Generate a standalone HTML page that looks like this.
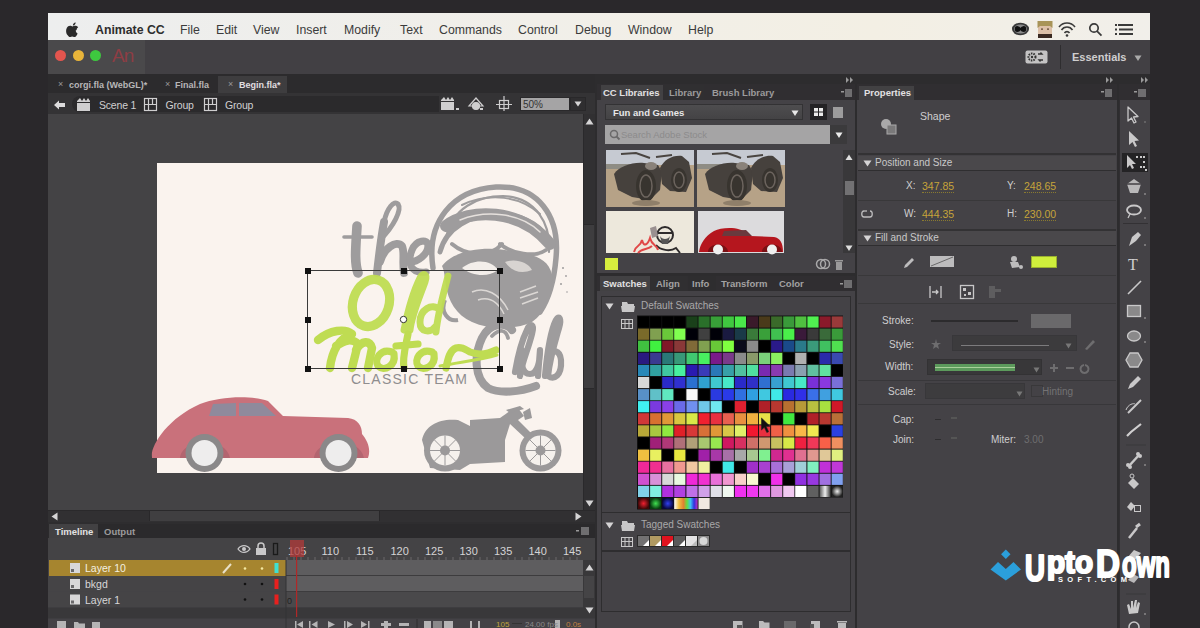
<!DOCTYPE html>
<html><head><meta charset="utf-8">
<style>
*{margin:0;padding:0;box-sizing:border-box}
html,body{width:1200px;height:628px;overflow:hidden;background:#2a282b;font-family:"Liberation Sans",sans-serif}
div{position:absolute}
.t{white-space:nowrap;line-height:1}
.mb{top:11px;font-size:12.3px;color:#3b3b3b}
.pt{font-size:10px;color:#c9c8c9}
.ptb{font-size:10px;color:#dcdbdc;font-weight:bold}
</style></head><body>

<!-- MENU BAR -->
<div style="left:48px;top:13px;width:1102px;height:27px;background:linear-gradient(90deg,#edeeee,#f1efe9 45%,#f3efe4 75%,#f1efea)">
  <svg style="position:absolute;left:18px;top:9px" width="13" height="15" viewBox="0 0 13 15"><path d="M10.6 8c0-1.8 1.5-2.7 1.6-2.8-.9-1.3-2.3-1.5-2.8-1.5-1.2-.1-2.3.7-2.9.7-.6 0-1.5-.7-2.5-.7C2.700 3.8 1.500 4.500.9 5.700-.4 8-.1 11.400 1.700 13.300c.6.900 1.300 1.800 2.200 1.800.9 0 1.200-.6 2.300-.6s1.400.6 2.300.6c.9 0 1.500-.9 2.100-1.700.7-1 .9-1.900 1-2-.1 0-1.900-.7-1.900-2.800zM8.900 2.600c.5-.6.800-1.400.7-2.200-.7 0-1.500.5-2 1.100-.4.500-.8 1.300-.7 2.100.8.100 1.500-.4 2-1z" fill="#2a2a2a"/></svg>
  <div class="t mb" style="left:47px;font-weight:bold;color:#2e2e2e">Animate CC</div>
  <div class="t mb" style="left:132px">File</div>
  <div class="t mb" style="left:168px">Edit</div>
  <div class="t mb" style="left:205px">View</div>
  <div class="t mb" style="left:248px">Insert</div>
  <div class="t mb" style="left:296px">Modify</div>
  <div class="t mb" style="left:352px">Text</div>
  <div class="t mb" style="left:391px">Commands</div>
  <div class="t mb" style="left:470px">Control</div>
  <div class="t mb" style="left:527px">Debug</div>
  <div class="t mb" style="left:580px">Window</div>
  <div class="t mb" style="left:640px">Help</div>
  <!-- status icons -->
  <svg style="position:absolute;left:964px;top:8px" width="160" height="18" viewBox="0 0 160 18">
    <ellipse cx="8.500" cy="8" rx="8.500" ry="6.200" fill="#3a3a3a"/><ellipse cx="8.500" cy="8" rx="6.500" ry="4.500" fill="#8a8a8a"/><path d="M3.500 8 C3.500 5 6.500 5 8.500 8 C10.500 11 13.500 11 13.500 8 C13.500 5 10.500 5 8.500 8 C6.500 11 3.500 11 3.500 8Z" fill="#111" stroke="#111" stroke-width="1.500"/>
    <rect x="26" y="5" width="14" height="9" fill="#dcc0a8"/><path d="M25.500 0 L40.500 0 L40.500 7 L38 5 L28 5 L25.500 7Z" fill="#a89458"/><rect x="26" y="13" width="14" height="4" fill="#3a2a22"/><g fill="#5a4030"><rect x="29" y="7.500" width="2" height="1.200"/><rect x="35" y="7.500" width="2" height="1.200"/></g>
    <g fill="none" stroke="#3a3a3a" stroke-width="1.600"><path d="M47 6a10 10 0 0 1 16 0"/><path d="M49.500 9a6.500 6.500 0 0 1 11 0"/><path d="M52.500 12a3 3 0 0 1 5 0"/></g><circle cx="55" cy="14.500" r="1.300" fill="#3a3a3a"/>
    <g fill="none" stroke="#3a3a3a" stroke-width="1.700"><circle cx="82" cy="7" r="4.200"/><path d="M85 10.200l4.500 4.500"/></g>
    <g fill="#3a3a3a"><rect x="106" y="3" width="15" height="2"/><rect x="107" y="7.500" width="14" height="2"/><rect x="107" y="12" width="14" height="2"/><rect x="103" y="3" width="2" height="2"/><rect x="103" y="7.500" width="2" height="2"/><rect x="103" y="12" width="2" height="2"/></g>
  </svg>
</div>

<!-- TITLE BAR -->
<div style="left:48px;top:40px;width:1102px;height:34px;background:#424044"></div>
<div style="left:48px;top:40px;width:97px;height:34px;background:#4a494b"></div>
<div style="left:55px;top:50px;width:11px;height:11px;border-radius:6px;background:#e4554e"></div>
<div style="left:72.5px;top:50px;width:11px;height:11px;border-radius:6px;background:#e9b53a"></div>
<div style="left:89.5px;top:50px;width:11px;height:11px;border-radius:6px;background:#3ec93f"></div>
<div class="t" style="left:112px;top:46px;font-size:19px;letter-spacing:-1px;color:#8e3d44">An</div>
<svg style="position:absolute;left:1025px;top:50px" width="23" height="14"><rect x="0.500" y="0.500" width="22" height="13" rx="2" fill="#c4c3c4"/><circle cx="7" cy="7" r="3.500" fill="none" stroke="#333" stroke-width="2" stroke-dasharray="1.500 1"/><circle cx="7" cy="7" r="1.200" fill="#333"/><path d="M13 4 h4 l-1.500 -1.500 M18 10 h-4 l1.500 1.500" stroke="#333" stroke-width="1.300" fill="none"/></svg>
<div style="left:1060px;top:45px;width:1px;height:24px;background:#2e2d2f"></div>
<div class="t" style="left:1072px;top:52px;font-size:11px;font-weight:bold;color:#cfcecf">Essentials</div>
<svg style="position:absolute;left:1134px;top:55px" width="9" height="8"><path d="M0.500 0.500h7l-3.5 5.6z" fill="#aaa"/></svg>

<!-- DOC TABS -->
<div style="left:48px;top:74px;width:547px;height:19px;background:#2c2b2d"></div>
<div style="left:218px;top:76px;width:69px;height:17px;background:#3e3d3f"></div>
<div class="t" style="left:58px;top:80px;font-size:9px;color:#9a999a">&#215;</div>
<div class="t" style="left:69px;top:80.500px;font-size:9px;font-weight:bold;color:#b8b7b8">corgi.fla (WebGL)*</div>
<div class="t" style="left:165px;top:80px;font-size:9px;color:#9a999a">&#215;</div>
<div class="t" style="left:175px;top:80.500px;font-size:9px;font-weight:bold;color:#b8b7b8">Final.fla</div>
<div class="t" style="left:228px;top:80px;font-size:9px;color:#9a999a">&#215;</div>
<div class="t" style="left:239px;top:80.500px;font-size:9px;font-weight:bold;color:#e0dfe0">Begin.fla*</div>
<!-- EDIT BAR -->
<div style="left:48px;top:93px;width:547px;height:21px;background:#343335"></div>
<div style="left:72px;top:96px;width:367px;height:16px;background:#2b2a2c;border-radius:8px 0 0 8px"></div>
<svg style="position:absolute;left:53px;top:99px" width="13" height="12"><path d="M1 6 L6 1.500 L6 4 L12 4 L12 8 L6 8 L6 10.500 Z" fill="#dcdbdc"/></svg>
<div class="t" style="left:99px;top:99.500px;font-size:10.500px;color:#d0cfd0;letter-spacing:-0.200px">Scene 1</div>
<div class="t" style="left:165.500px;top:99.500px;font-size:10.500px;color:#d0cfd0;letter-spacing:-0.200px">Group</div>
<div class="t" style="left:225px;top:99.500px;font-size:10.500px;color:#d0cfd0;letter-spacing:-0.200px">Group</div>
<svg style="position:absolute;left:0;top:0" width="600" height="120" viewBox="0 0 600 120">
 <g fill="#cfcecf">
  <rect x="77" y="103" width="13" height="8"/><path d="M77 101 L80 98 L82 101 L84 98 L86 101 L88 98 L90 101 L90 102 L77 102Z"/>
  <rect x="441" y="102" width="13" height="8"/><path d="M441 100 L444 97 L446 100 L448 97 L450 100 L452 97 L454 100 L454 101 L441 101Z"/>
  <rect x="456" y="108" width="3" height="2"/><rect x="480" y="108" width="3" height="2"/>
 </g>
 <g fill="none" stroke="#cfcecf" stroke-width="1.200">
  <rect x="144.500" y="98.500" width="12" height="12"/><path d="M144.500 104.500h12M148.500 98.500v6M152.500 98.500v6M148.500 104.500v6"/>
  <rect x="204.500" y="98.500" width="12" height="12"/><path d="M204.500 104.500h12M208.500 98.500v6M212.500 98.500v6M208.500 104.500v6"/>
  <path d="M469 106 L476 98 L483 106 Z"/><circle cx="476" cy="106" r="3.500" fill="#cfcecf"/>
  <rect x="499.500" y="100.500" width="9" height="8"/><path d="M504 96v15M496 104.500h16"/>
 </g>
</svg>
<div style="left:520px;top:97px;width:50px;height:14px;background:#a5a4a5;border:1px solid #2a292b"></div>
<div class="t" style="left:523px;top:99.500px;font-size:10px;color:#333">50%</div>
<div style="left:570px;top:97px;width:16px;height:14px;background:#2f2e30;border:1px solid #29282a"></div>
<svg style="position:absolute;left:574px;top:101px" width="9" height="7"><path d="M0.500 0.500h7l-3.500 5z" fill="#d5d4d5"/></svg>
<!-- STAGE -->
<div style="left:48px;top:114px;width:547px;height:396px;background:#444345"></div>
<div style="left:583px;top:114px;width:12px;height:396px;background:#313032;border-left:1px solid #2a292b"></div>
<div style="left:584px;top:224px;width:10px;height:165px;background:#3e3d3f;border-top:1px solid #2a292b;border-bottom:1px solid #2a292b"></div>
<svg style="position:absolute;left:585px;top:118px" width="9" height="7"><path d="M0.500 6.500h8l-4-6z" fill="#d5d4d5"/></svg>
<svg style="position:absolute;left:585px;top:500px" width="9" height="7"><path d="M0.500 0.500h8l-4 6z" fill="#d5d4d5"/></svg>
<div style="left:157px;top:163px;width:426px;height:310px;background:#faf3ee;overflow:hidden">
</div>
<svg style="position:absolute;left:0;top:0" width="1200" height="628" viewBox="0 0 1200 628">
 <!-- helmet ring -->
 <g fill="none" stroke="#9e9c9d" stroke-linecap="round">
  <path d="M433 268 C426 222 452 190 496 187 C538 185 560 216 556 258 C554 282 548 300 540 312" stroke-width="5.500"/>
  <path d="M446 238 C452 208 478 196 503 196 C536 197 551 224 549 252" stroke-width="2.200"/>
  <path d="M462 205 C490 192 520 196 540 214" stroke-width="2"/>
 </g>
 <!-- goggles band -->
 <g fill="none" stroke="#9e9c9d" stroke-linecap="round">
  <path d="M440 252 C446 228 470 214 500 214 C526 215 545 228 552 246" stroke-width="5"/>
  <path d="M446 226 C470 208 520 208 550 244" stroke-width="12"/>
  <path d="M460 220 C485 210 520 212 540 232" stroke="#e6e1dd" stroke-width="1.500"/>
  <path d="M452 244 C466 256 490 258 502 244" stroke-width="4"/>
  <path d="M500 244 C512 254 535 258 546 250" stroke-width="4"/>
 </g>
 <!-- face / mask -->
 <path d="M442 266 C452 252 480 246 505 250 C530 254 548 256 552 275 C553 295 546 312 532 322 C515 330 490 330 472 322 C456 315 448 300 446 286 C445 277 444 270 442 266 Z" fill="#9e9c9d"/>
 <path d="M462 268 C474 258 492 260 498 270 C488 278 472 276 462 268 Z" fill="#f3eeea"/>
 <path d="M505 262 C515 258 528 262 532 270 C522 274 512 272 505 262 Z" fill="#d8d4d1"/>
 <g stroke="#dcd8d5" stroke-width="1.500" fill="none"><path d="M472 292 C485 286 500 294 508 310"/><path d="M478 300 C490 296 498 302 504 314"/><path d="M520 292 L536 286 M520 298 L538 292 M522 304 L538 298"/></g>
 <path d="M445 300 C440 312 448 322 458 320" stroke="#9e9c9d" stroke-width="4" fill="none"/>
 <g fill="#9e9c9d"><circle cx="563" cy="268" r="1"/><circle cx="566" cy="276" r="0.900"/><circle cx="561" cy="284" r="1"/><circle cx="567" cy="292" r="0.800"/></g>
 <!-- the -->
 <g fill="none" stroke="#9e9c9d" stroke-linecap="round" stroke-linejoin="round">
  <path d="M357 226 C356 245 354 262 358 273" stroke-width="9.6"/>
  <path d="M344 237 L372 237" stroke-width="3.6"/>
  <path d="M377 273 C379 255 381 238 384 222" stroke-width="8"/><path d="M384 222 C387 208 394 200 398 204 C402 210 394 226 380 240" stroke-width="5"/>
  <path d="M380 262 C384 248 396 240 402 246 C405 252 402 262 404 273" stroke-width="7.8"/>
  <path d="M410 262 C418 262 428 254 428 246 C428 238 416 240 412 250 C407 262 410 274 426 272" stroke-width="7.2"/>
 </g>
 <!-- Club -->
 <g fill="none" stroke="#9e9c9d" stroke-linecap="round" stroke-linejoin="round">
  <path d="M512 330 C506 322 490 322 482 338 C474 355 474 378 488 388 C500 394 520 392 536 386" stroke-width="8.1"/>
  <path d="M492 336 C500 328 506 330 508 338" stroke-width="3.8"/>
  <path d="M515 372 C518 355 522 340 527 330 C530 322 535 324 532 334 C528 350 522 362 520 376" stroke-width="6.2"/>
  <path d="M522 350 C520 362 522 374 530 374 C538 374 540 360 540 350 L538 376" stroke-width="6.2"/>
  <path d="M545 376 C547 354 550 332 556 320 C559 315 562 318 559 328 C555 342 550 358 548 376 C554 380 562 376 561 360 C560 350 552 348 548 356" stroke-width="6.2"/>
 </g>
 <!-- Old -->
 <g fill="none" stroke="#bfdc52" stroke-linecap="round" stroke-linejoin="round" stroke-opacity="0.95">
  <ellipse cx="371" cy="303" rx="18" ry="24" transform="rotate(18 371 303)" stroke-width="9.2"/>
  <path d="M404 330 C408 310 414 290 420 278 C423 272 428 274 425 282 C420 296 412 314 410 330" stroke-width="6.9"/>
  <path d="M440 310 C432 302 420 310 420 322 C420 332 430 334 436 326 M448 276 C444 292 438 312 436 332" stroke-width="6.9"/>
 </g>
 <!-- Motor -->
 <g fill="none" stroke="#bfdc52" stroke-linecap="round" stroke-linejoin="round">
  <path d="M318 340 C330 330 345 328 352 334 C340 338 332 350 330 368 M336 346 C345 340 352 338 358 344 L352 368 M356 350 C362 340 370 340 372 348 L368 368" stroke-width="8.4"/>
  <path d="M392 352 C380 348 374 360 378 366 C384 372 396 366 394 354" stroke-width="7.2"/>
  <path d="M408 334 C406 345 402 358 404 368 M396 346 L418 344" stroke-width="7.2"/>
  <path d="M432 352 C420 348 414 360 418 366 C424 372 436 366 434 354" stroke-width="7.2"/>
  <path d="M446 368 C448 358 450 350 456 348 C462 346 466 350 470 352 C480 356 488 354 496 350" stroke-width="7.2"/>
  <path d="M440 366 C460 362 480 360 497 355" stroke-width="3.0"/>
 </g>
 <text x="351" y="384" font-family="Liberation Sans" font-size="14" fill="#8f8d8e" textLength="116" lengthAdjust="spacing">CLASSIC TEAM</text>
 <!-- selection -->
 <rect x="307.500" y="270.500" width="192" height="98" fill="none" stroke="#3a3a3a" stroke-width="1"/>
 <g fill="#111">
  <rect x="305" y="268" width="6" height="6"/><rect x="401" y="268" width="6" height="6"/><rect x="497" y="268" width="6" height="6"/>
  <rect x="305" y="317" width="6" height="6"/><rect x="497" y="317" width="6" height="6"/>
  <rect x="305" y="366" width="6" height="6"/><rect x="401" y="366" width="6" height="6"/><rect x="497" y="366" width="6" height="6"/>
 </g>
 <circle cx="403.500" cy="319.500" r="3.200" fill="#fff" stroke="#333" stroke-width="1"/>
 <!-- car -->
 <path d="M152 457 C150 446 168 418 200 404 C220 396 252 395 268 401 L283 416 L348 418 C358 419 362 426 362 434 C368 441 371 450 368 458 L152 458 Z" fill="#c9717b"/>
 <path d="M213 404 L236 403 L236 416 L209 416 Z M239 403 L262 403 L276 416 L239 416 Z" fill="#8f8a9c"/>
 <path d="M180 458 C182 438 226 436 230 458 Z M314 458 C316 438 360 436 364 458 Z" fill="#b36570"/>
 <circle cx="204.500" cy="453" r="19" fill="#8a8889"/><circle cx="204.500" cy="453" r="13" fill="#eeeded"/>
 <circle cx="338.500" cy="453" r="19" fill="#8a8889"/><circle cx="338.500" cy="453" r="13" fill="#eeeded"/>
 <!-- motorcycle -->
 <g fill="#9b999a">
  <circle cx="445" cy="450.500" r="21"/><circle cx="540.500" cy="450.500" r="21"/>
  <path d="M422 440 C425 425 440 418 458 420 L470 426 L470 420 L500 418 C505 415 508 412 512 410 L518 408 L524 416 L518 420 L546 448 L540 452 L510 424 L505 440 L505 462 L470 464 L460 470 L430 468 Z"/>
  <path d="M506 410 L520 406 L524 409 L510 413 Z"/><path d="M523 412 L530 408 L532 418 L525 420 Z"/>
 </g>
 <g fill="#f5f1ed"><circle cx="445" cy="450.500" r="15"/><circle cx="540.500" cy="450.500" r="15"/></g>
 <g stroke="#9b999a" stroke-width="1"><path d="M430 450.500h30M445 435.500v30M434.400 439.900l21.200 21.200M434.400 461.100l21.200-21.200M525.500 450.500h30M540.500 435.500v30M529.900 439.900l21.200 21.200M529.900 461.100l21.200-21.200"/></g>
 <g fill="#9b999a"><circle cx="445" cy="450.500" r="5"/><circle cx="540.500" cy="450.500" r="5"/></g>
</svg>
<!-- h scrollbar -->
<div style="left:48px;top:510px;width:547px;height:12px;background:#313032;border-top:1px solid #2a292b"></div>
<div style="left:149px;top:511px;width:231px;height:10px;background:#403f41;border-left:1px solid #29282a;border-right:1px solid #29282a"></div>
<svg style="position:absolute;left:51px;top:512px" width="7" height="9"><path d="M6.500 0.500v8l-6-4z" fill="#d5d4d5"/></svg>
<svg style="position:absolute;left:575px;top:512px" width="7" height="9"><path d="M0.500 0.500v8l6-4z" fill="#d5d4d5"/></svg>
<!-- TIMELINE -->
<div style="left:48px;top:522px;width:547px;height:106px;background:#444246"></div>
<div style="left:48px;top:522px;width:547px;height:2px;background:#2e2d2f"></div>
<div style="left:48px;top:524px;width:547px;height:14px;background:#2b2a2c"></div>
<div style="left:49px;top:524px;width:49px;height:14px;background:#424143"></div>
<div class="t ptb" style="left:55px;top:527px;font-size:9.5px;color:#e2e1e2">Timeline</div>
<div class="t pt" style="left:104px;top:527px;font-size:9.5px;font-weight:bold;color:#9c9b9c">Output</div>
<svg style="position:absolute;left:574px;top:526px" width="20" height="10"><g fill="#9a999a"><rect x="2" y="4" width="3" height="1.500"/><rect x="7" y="1" width="8" height="8" fill="#6f6e70"/></g></svg>
<!-- header -->
<div style="left:48px;top:538px;width:547px;height:22px;background:#444345"></div>
<svg style="position:absolute;left:236px;top:542px" width="50" height="14"><g fill="none" stroke="#c9c8c9" stroke-width="1.300"><path d="M2 7 C5 2.500 11 2.500 14 7 C11 11.500 5 11.500 2 7Z"/></g><circle cx="8" cy="7" r="2" fill="#c9c8c9"/><rect x="20" y="6" width="10" height="7" fill="#c9c8c9"/><path d="M22 6 V4 a3 3 0 0 1 6 0 V6" fill="none" stroke="#c9c8c9" stroke-width="1.500"/><rect x="37.500" y="1.500" width="4" height="11" fill="none" stroke="#1a1a1a" stroke-width="1.300"/></svg>
<svg style="position:absolute;left:0;top:0" width="1200" height="628" viewBox="0 0 1200 628">
 <g font-family="Liberation Sans" font-size="11" fill="#d5d4d5">
  <text x="288" y="555">105</text><text x="321.500" y="555">110</text><text x="356" y="555">115</text><text x="390.500" y="555">120</text><text x="425" y="555">125</text><text x="459.500" y="555">130</text><text x="494" y="555">135</text><text x="528.500" y="555">140</text><text x="563" y="555">145</text>
 </g>
 <g stroke="#6a696b" stroke-width="1">
  <path d="M287 557v3M294 557v3M301 557v3M308 557v3M315 557v3M322 557v3M328 557v3M335 557v3M342 557v3M349 557v3M356 557v3M363 557v3M370 557v3M377 557v3M384 557v3M391 557v3M397 557v3M404 557v3M411 557v3M418 557v3M425 557v3M432 557v3M439 557v3M446 557v3M453 557v3M460 557v3M466 557v3M473 557v3M480 557v3M487 557v3M494 557v3M501 557v3M508 557v3M515 557v3M522 557v3M529 557v3M535 557v3M542 557v3M549 557v3M556 557v3M563 557v3M570 557v3M577 557v3"/>
 </g>
 <!-- rows -->
 <rect x="49" y="560" width="237" height="16" fill="#a6852f"/>
 <rect x="48" y="576" width="238" height="15.500" fill="#454446"/>
 <rect x="48" y="591.500" width="238" height="16" fill="#454446"/>
 <rect x="286" y="560" width="297" height="15" fill="#5e5d5f"/>
 <rect x="286" y="575" width="297" height="1" fill="#3d3c3e"/>
 <rect x="286" y="576" width="297" height="15" fill="#5e5d5f"/>
 <rect x="286" y="591" width="297" height="1" fill="#3d3c3e"/>
 <rect x="286" y="592" width="297" height="15" fill="#4a494b"/>
 <rect x="48" y="607.500" width="547" height="11" fill="#39383a"/>
 <rect x="285.500" y="560" width="1" height="68" fill="#333234"/>
 <!-- layer icons -->
 <g fill="#d8d7d8"><rect x="70" y="563" width="10" height="10"/><rect x="70" y="579" width="10" height="10"/><rect x="70" y="594.500" width="10" height="10"/></g>
 <g fill="#6a696b"><rect x="71" y="569" width="3" height="3"/><rect x="71" y="585" width="3" height="3"/><rect x="71" y="600.500" width="3" height="3"/></g>
 <g font-family="Liberation Sans" font-size="10.500">
  <text x="85" y="572" fill="#f4f0e0">Layer 10</text>
  <text x="85" y="588" fill="#d8d7d8">bkgd</text>
  <text x="85" y="604" fill="#d8d7d8">Layer 1</text>
 </g>
 <path d="M223 573 L231 564" stroke="#e8e0c8" stroke-width="2"/>
 <g fill="#f4e8a0"><circle cx="245" cy="568.500" r="1.300"/><circle cx="262" cy="568.500" r="1.300"/></g>
 <g fill="#111"><circle cx="245" cy="584" r="1.300"/><circle cx="262" cy="584" r="1.300"/><circle cx="245" cy="599.500" r="1.300"/><circle cx="262" cy="599.500" r="1.300"/></g>
 <rect x="274.500" y="563" width="4" height="10" fill="#40e0d0"/>
 <rect x="274.500" y="579" width="4" height="10" fill="#e8201e"/>
 <rect x="274.500" y="594.500" width="4" height="10" fill="#e8201e"/>
 <text x="287" y="604" font-family="Liberation Sans" font-size="9" fill="#222">0</text>
 <!-- playhead -->
 <rect x="290" y="540" width="14" height="17" fill="#b23a3a" fill-opacity="0.75"/>
 <rect x="296" y="555" width="1.200" height="62" fill="#b02828"/>
 <!-- v scrollbar -->
 <rect x="583" y="560" width="12" height="57" fill="#39383a"/>
 <rect x="584" y="576" width="10" height="22" fill="#454446"/>
</svg>
<svg style="position:absolute;left:585px;top:564px" width="9" height="7"><path d="M0.500 6.500h8l-4-6z" fill="#d5d4d5"/></svg>
<svg style="position:absolute;left:585px;top:607px" width="9" height="7"><path d="M0.500 0.500h8l-4 6z" fill="#d5d4d5"/></svg>
<!-- bottom toolbar -->
<svg style="position:absolute;left:0;top:617px" width="600" height="11" viewBox="0 617 600 11">
 <g fill="#b5b4b5">
  <rect x="57" y="621" width="9" height="7"/><path d="M74 622h4l1 1.500h6v4.500H74z"/><path d="M92 622h8v6h-8z"/><rect x="555" y="620" width="5" height="8"/>
  <path d="M295 621v7h1.500v-7zM297 624.500l6-3.500v7z"/>
  <path d="M309 621v7h1.500v-7zM311.500 624.500l6-3.500v7z"/>
  <path d="M328 621l7 3.500-7 3.500z"/>
  <path d="M344 621v7h1.500v-7zM347 621l6 3.500-6 3.500z"/>
  <path d="M361 621l6 3.500-6 3.500zM368 621v7h1.500v-7z"/>
  <path d="M381 623h10v3h-10zM384 621h4v7h-4z"/>
  <path d="M399 623h10v3h-10z"/>
  <rect x="424" y="621" width="7" height="7"/><rect x="433" y="621" width="9" height="7" fill="#8a898a"/><rect x="444" y="621" width="9" height="7"/>
  <path d="M470 621h2v7h-2zM478 621h2v7h-2z"/>
 </g>
 <rect x="416.500" y="619" width="1" height="9" fill="#2e2d2f"/>
 <text x="496" y="627" font-family="Liberation Sans" font-size="8" fill="#bfa43a">105</text>
 <rect x="512" y="623" width="10" height="1" fill="#333"/>
 <text x="525" y="627" font-family="Liberation Sans" font-size="8" fill="#8a898a">24.00 fps</text>
 <text x="566" y="627" font-family="Liberation Sans" font-size="8" fill="#c08040">0.0s</text>
</svg>
<!-- RIGHT DARK STRIP -->
<div style="left:595px;top:74px;width:555px;height:554px;background:#2d2c2e"></div>

<!-- CC LIBRARIES -->
<div style="left:597px;top:84px;width:258px;height:189px;background:#444246"></div>
<div style="left:597px;top:84px;width:258px;height:16px;background:#302e31"></div>
<div style="left:601px;top:85px;width:62px;height:15px;background:#424143"></div>
<div style="left:664px;top:85px;width:40px;height:15px;background:#302f31"></div>
<div class="t ptb" style="left:603px;top:88px;font-size:9.5px;color:#e2e1e2">CC Libraries</div>
<div class="t pt" style="left:669px;top:88px;font-size:9.5px;font-weight:bold;color:#9c9b9c">Library</div>
<div class="t pt" style="left:712px;top:88px;font-size:9.5px;font-weight:bold;color:#9c9b9c">Brush Library</div>
<svg style="position:absolute;left:836px;top:75px" width="18" height="24" viewBox="0 0 18 24"><g fill="#9a999a"><path d="M10 2l3 3-3 3z"/><path d="M14 2l3 3-3 3z"/><rect x="5" y="16" width="3" height="1.5"/><rect x="9" y="14" width="7" height="8" fill="#6f6e70"/></g></svg>
<!-- dropdown -->
<div style="left:605px;top:104px;width:198px;height:16px;background:linear-gradient(#4e4d4f,#444345);border:1px solid #333234"></div>
<div class="t" style="left:613px;top:108px;font-size:9.5px;font-weight:bold;color:#e8e7e8">Fun and Games</div>
<svg style="position:absolute;left:791px;top:110px" width="9" height="8"><path d="M0.500 0.500h7l-3.5 5.6z" fill="#e8e8e8"/></svg>
<div style="left:810px;top:104px;width:17px;height:16px;background:#242325"></div>
<svg style="position:absolute;left:810px;top:104px" width="17" height="16"><g fill="#ececec"><rect x="4" y="4" width="4" height="3.500"/><rect x="9" y="4" width="4" height="3.500"/><rect x="4" y="8.500" width="4" height="3.500"/><rect x="9" y="8.500" width="4" height="3.500"/></g></svg>
<div style="left:833px;top:107px;width:10px;height:11px;background:#9d9c9d"></div>
<!-- search -->
<div style="left:605px;top:125px;width:225px;height:19px;background:#a5a4a5"></div>
<svg style="position:absolute;left:609px;top:129px" width="12" height="12"><circle cx="5" cy="5" r="3.500" fill="none" stroke="#6a696a" stroke-width="1.500"/><path d="M7.500 7.500l3 3" stroke="#6a696a" stroke-width="1.800"/></svg>
<div class="t" style="left:621px;top:130px;font-size:9.5px;color:#8c8b8c">Search Adobe Stock</div>
<div style="left:830px;top:125px;width:17px;height:19px;background:#3b3a3c"></div>
<svg style="position:absolute;left:835px;top:132px" width="9" height="8"><path d="M0.500 0.500h7l-3.5 5.6z" fill="#ececec"/></svg>
<!-- thumbs -->
<svg style="position:absolute;left:0;top:0" width="1200" height="628" viewBox="0 0 1200 628">
<defs>
<linearGradient id="sky" x1="0" y1="0" x2="0" y2="1"><stop offset="0" stop-color="#c6c8d2"/><stop offset="0.28" stop-color="#c4c2c6"/><stop offset="0.34" stop-color="#a59a8a"/><stop offset="1" stop-color="#b8a284"/></linearGradient>
<g id="bike">
 <rect x="0" y="0" width="88" height="57" fill="#b6a287"/>
 <rect x="0" y="0" width="88" height="15" fill="#c6cad2"/>
 <rect x="0" y="14" width="40" height="5" fill="#8e8c84"/>
 <g fill="#46413d">
  <path d="M8 24 C14 16 26 12 38 13 L52 15 L56 22 L54 40 L44 50 L26 47 L12 40 Z"/>
  <path d="M54 18 C58 10 66 5 76 6 L83 12 L86 28 L80 42 L64 41 L56 34 Z"/>
 </g>
 <g fill="#38342f"><ellipse cx="40" cy="36" rx="10" ry="16"/><ellipse cx="73" cy="30" rx="8" ry="12"/></g>
 <g fill="none" stroke="#6c645e" stroke-width="1.500"><ellipse cx="40" cy="36" rx="6" ry="11"/><ellipse cx="73" cy="30" rx="5" ry="8"/></g>
 <g fill="none" stroke="#4a4541" stroke-width="2"><path d="M15 4 L30 3 L44 8"/><path d="M50 7 L66 5"/></g>
 <ellipse cx="45" cy="16" rx="6" ry="4" fill="#8a827a"/>
 <ellipse cx="40" cy="53" rx="14" ry="3" fill="#8f7f6a"/>
</g>
</defs>
<use href="#bike" x="606" y="150"/>
<use href="#bike" x="697" y="150"/>
<rect x="606" y="211" width="88" height="42" fill="#ede8dc"/>
<g fill="none" stroke="#2e2b2c" stroke-width="2"><circle cx="665" cy="235" r="8"/><path d="M657 233 L673 233"/><path d="M656 245 C660 250 670 252 676 248 L680 253"/></g>
<path d="M660 236 C662 240 668 240 670 236 L668 244 L662 244Z" fill="#555"/>
<g fill="none" stroke="#e04848" stroke-width="2"><path d="M634 252 C636 244 640 248 642 240 C644 248 648 244 650 238 C652 246 656 244 658 250"/><path d="M638 253 C642 248 648 250 652 246"/></g>
<path d="M650 228 L656 226 L658 236 L652 238Z" fill="#9a9090"/>
<rect x="698" y="211" width="86" height="42" fill="#dcdbdd"/>
<path d="M699 252 C700 244 705 236 714 231 C722 227 740 226 748 234 L750 236 L774 237 C780 238 783 243 783 252 Z" fill="#b5161e"/>
<path d="M724 231 L746 230 L752 236 L722 236Z" fill="#6a3a3e"/>
<path d="M708 252 C708 242 728 242 728 252Z M762 252 C762 242 782 242 782 252Z" fill="#7a1014"/>
<g fill="#f0f0f0"><circle cx="718" cy="249.500" r="5"/><circle cx="772" cy="249.500" r="5"/></g>
</svg>
<!-- cc scrollbar -->
<div style="left:843px;top:150px;width:12px;height:103px;background:#39383a"></div>
<svg style="position:absolute;left:845px;top:154px" width="9" height="8"><path d="M0.500 6.1h7l-3.5 -5.6z" fill="#ddd"/></svg>
<div style="left:845px;top:181px;width:9px;height:14px;background:#727173"></div>
<svg style="position:absolute;left:845px;top:245px" width="9" height="8"><path d="M0.500 0.500h7l-3.5 5.6z" fill="#ddd"/></svg>
<!-- bottom -->
<div style="left:605px;top:258px;width:13px;height:12px;background:#d6ee3e"></div>
<svg style="position:absolute;left:812px;top:256px" width="40" height="16"><g fill="none" stroke="#a9a8a9" stroke-width="1.500"><circle cx="9" cy="8" r="4.500"/><circle cx="13" cy="8" r="4.500"/></g><g fill="#9a999a"><rect x="23" y="4" width="8" height="1.500"/><rect x="24" y="6" width="6" height="8"/></g></svg>
<!-- SWATCHES -->
<div style="left:597px;top:276px;width:258px;height:352px;background:#444246"></div>
<div style="left:597px;top:276px;width:258px;height:15px;background:#302e31"></div>
<div style="left:600px;top:276px;width:50px;height:15px;background:#424143"></div>
<div style="left:651px;top:276px;width:36px;height:15px;background:#302f31"></div>
<div style="left:688px;top:276px;width:28px;height:15px;background:#2e2d2f"></div>
<div class="t ptb" style="left:603px;top:279px;font-size:9.5px;color:#e2e1e2">Swatches</div>
<div class="t pt" style="left:656px;top:279px;font-size:9.5px;font-weight:bold;color:#a3a2a3">Align</div>
<div class="t pt" style="left:692px;top:279px;font-size:9.5px;font-weight:bold;color:#a3a2a3">Info</div>
<div class="t pt" style="left:721px;top:279px;font-size:9.5px;font-weight:bold;color:#a3a2a3">Transform</div>
<div class="t pt" style="left:779px;top:279px;font-size:9.5px;font-weight:bold;color:#a3a2a3">Color</div>
<svg style="position:absolute;left:838px;top:278px" width="16" height="12"><g fill="#9a999a"><rect x="2" y="5" width="3" height="1.500"/><rect x="6" y="2" width="8" height="8" fill="#6f6e70"/></g></svg>
<!-- inner frame -->
<div style="left:601px;top:296px;width:250px;height:316px;border:1px solid #2e2d2f;background:#444246"></div>
<div style="left:602px;top:512px;width:248px;height:1px;background:#2e2d2f"></div>
<div style="left:602px;top:550px;width:248px;height:2px;background:#2e2d2f"></div>
<svg style="position:absolute;left:605px;top:303px" width="9" height="7"><path d="M0.500 0.500h8l-4 6z" fill="#d5d4d5"/></svg>
<svg style="position:absolute;left:620px;top:299px" width="16" height="14"><g fill="#c8c7c8"><path d="M2 3h5l1 2h6v2H2z"/><path d="M1 7h14l-1 6H2z"/></g></svg>
<div class="t pt" style="left:641px;top:301px;font-size:10px;color:#a9a8a9">Default Swatches</div>
<svg style="position:absolute;left:620px;top:318px" width="14" height="12"><g fill="none" stroke="#c8c7c8" stroke-width="1"><rect x="1.500" y="1.500" width="11" height="9"/><path d="M1.500 5.500h11M5 1.500v9M9 1.500v9"/></g></svg>
<svg style="position:absolute;left:605px;top:522px" width="9" height="7"><path d="M0.500 0.500h8l-4 6z" fill="#d5d4d5"/></svg>
<svg style="position:absolute;left:620px;top:518px" width="16" height="14"><g fill="#c8c7c8"><path d="M2 3h5l1 2h6v2H2z"/><path d="M1 7h14l-1 6H2z"/></g></svg>
<div class="t pt" style="left:641px;top:520px;font-size:10px;color:#a9a8a9">Tagged Swatches</div>
<svg style="position:absolute;left:620px;top:536px" width="14" height="12"><g fill="none" stroke="#c8c7c8" stroke-width="1"><rect x="1.500" y="1.500" width="11" height="9"/><path d="M1.500 5.500h11M5 1.500v9M9 1.500v9"/></g></svg>
<svg style="position:absolute;left:0;top:0" width="1200" height="628" viewBox="0 0 1200 628">
 <rect x="637" y="535" width="73" height="12" fill="#2a2a2a"/>
 <rect x="638" y="536" width="11" height="10" fill="#727172"/><path d="M643 546 L649 540 L649 546Z" fill="#fff"/>
 <rect x="650" y="536" width="11" height="10" fill="#b09a62"/><path d="M655 546 L661 540 L661 546Z" fill="#fff"/>
 <rect x="662" y="536" width="11" height="10" fill="#e0121e"/><path d="M667 546 L673 540 L673 546Z" fill="#fff"/>
 <rect x="674" y="536" width="11" height="10" fill="#5a595a"/><path d="M679 546 L685 540 L685 546Z" fill="#fff"/>
 <rect x="686" y="536" width="11" height="10" fill="#e4e3e4"/><path d="M691 546 L697 540 L697 546Z" fill="#bbb"/>
 <rect x="698" y="536" width="11" height="10" fill="#8a898a"/><circle cx="703.500" cy="541" r="4" fill="#d8d8d8"/>
</svg>
<!-- bottom icons -->
<svg style="position:absolute;left:0;top:617px" width="1200" height="11" viewBox="0 617 1200 11">
 <g fill="#bcbbbc"><rect x="733" y="621" width="9.500" height="8"/><path d="M759 621h4l1.500 1.500h5v5.500h-10.500z"/><rect x="811" y="621" width="9" height="8"/><path d="M837 621h10v1.500h-10zM838 623h8v5h-8z"/></g>
 <path d="M737 625h5v3h-5z" fill="#555"/>
 <g fill="#6a696b"><rect x="784" y="621" width="12" height="8"/></g>
 <path d="M810 624h4v4h-4z" fill="#555"/>
</svg>
<!-- SWATCHGRID -->
<svg style="position:absolute;left:0;top:0" width="1200" height="628" viewBox="0 0 1200 628">
<defs>
<linearGradient id="lg"><stop offset="0" stop-color="#555"/><stop offset="0.5" stop-color="#eee"/><stop offset="1" stop-color="#333"/></linearGradient>
<radialGradient id="rg0"><stop offset="0" stop-color="#eee"/><stop offset="1" stop-color="#222"/></radialGradient>
<radialGradient id="rgr"><stop offset="0" stop-color="#f02030"/><stop offset="1" stop-color="#400808"/></radialGradient>
<radialGradient id="rgg"><stop offset="0" stop-color="#40e050"/><stop offset="1" stop-color="#084010"/></radialGradient>
<radialGradient id="rgb"><stop offset="0" stop-color="#3040f0"/><stop offset="1" stop-color="#080840"/></radialGradient>
<linearGradient id="rain"><stop offset="0" stop-color="#fff"/><stop offset="0.2" stop-color="#f0c040"/><stop offset="0.4" stop-color="#e08030"/><stop offset="0.55" stop-color="#60e040"/><stop offset="0.7" stop-color="#40c0f0"/><stop offset="0.85" stop-color="#3030e0"/><stop offset="1" stop-color="#c030c0"/></linearGradient>
</defs>
<rect x="637" y="315.5" width="206" height="182" fill="#111"/>
<rect x="637" y="497" width="73" height="12.5" fill="#111"/>
<rect x="638.0" y="316.4" width="11.2" height="11.2" fill="#000000"/>
<rect x="650.1" y="316.4" width="11.2" height="11.2" fill="#000000"/>
<rect x="662.2" y="316.4" width="11.2" height="11.2" fill="#000000"/>
<rect x="674.2" y="316.4" width="11.2" height="11.2" fill="#000000"/>
<rect x="686.4" y="316.4" width="11.2" height="11.2" fill="#1a401a"/>
<rect x="698.5" y="316.4" width="11.2" height="11.2" fill="#2a702a"/>
<rect x="710.6" y="316.4" width="11.2" height="11.2" fill="#38a038"/>
<rect x="722.7" y="316.4" width="11.2" height="11.2" fill="#40c840"/>
<rect x="734.8" y="316.4" width="11.2" height="11.2" fill="#4ae84a"/>
<rect x="746.9" y="316.4" width="11.2" height="11.2" fill="#3a1a2a"/>
<rect x="759.0" y="316.4" width="11.2" height="11.2" fill="#4a3a1a"/>
<rect x="771.1" y="316.4" width="11.2" height="11.2" fill="#3a6a2a"/>
<rect x="783.2" y="316.4" width="11.2" height="11.2" fill="#3a9a3a"/>
<rect x="795.2" y="316.4" width="11.2" height="11.2" fill="#50c040"/>
<rect x="807.4" y="316.4" width="11.2" height="11.2" fill="#50f050"/>
<rect x="819.5" y="316.4" width="11.2" height="11.2" fill="#8a1a2a"/>
<rect x="831.6" y="316.4" width="11.2" height="11.2" fill="#9a3a3a"/>
<rect x="638.0" y="328.6" width="11.2" height="11.2" fill="#7a6a2a"/>
<rect x="650.1" y="328.6" width="11.2" height="11.2" fill="#80a050"/>
<rect x="662.2" y="328.6" width="11.2" height="11.2" fill="#6ac83a"/>
<rect x="674.2" y="328.6" width="11.2" height="11.2" fill="#80ff50"/>
<rect x="686.4" y="328.6" width="11.2" height="11.2" fill="#000008"/>
<rect x="698.5" y="328.6" width="11.2" height="11.2" fill="#404040"/>
<rect x="710.6" y="328.6" width="11.2" height="11.2" fill="#000008"/>
<rect x="722.7" y="328.6" width="11.2" height="11.2" fill="#1a1a40"/>
<rect x="734.8" y="328.6" width="11.2" height="11.2" fill="#1a3a48"/>
<rect x="746.9" y="328.6" width="11.2" height="11.2" fill="#3a7a3a"/>
<rect x="759.0" y="328.6" width="11.2" height="11.2" fill="#3aa03a"/>
<rect x="771.1" y="328.6" width="11.2" height="11.2" fill="#40c050"/>
<rect x="783.2" y="328.6" width="11.2" height="11.2" fill="#4af04a"/>
<rect x="795.2" y="328.6" width="11.2" height="11.2" fill="#3a1a3a"/>
<rect x="807.4" y="328.6" width="11.2" height="11.2" fill="#3a3a3a"/>
<rect x="819.5" y="328.6" width="11.2" height="11.2" fill="#3a6a3a"/>
<rect x="831.6" y="328.6" width="11.2" height="11.2" fill="#3a9a3a"/>
<rect x="638.0" y="340.6" width="11.2" height="11.2" fill="#40c040"/>
<rect x="650.1" y="340.6" width="11.2" height="11.2" fill="#40f040"/>
<rect x="662.2" y="340.6" width="11.2" height="11.2" fill="#801828"/>
<rect x="674.2" y="340.6" width="11.2" height="11.2" fill="#8a3838"/>
<rect x="686.4" y="340.6" width="11.2" height="11.2" fill="#806a38"/>
<rect x="698.5" y="340.6" width="11.2" height="11.2" fill="#80a050"/>
<rect x="710.6" y="340.6" width="11.2" height="11.2" fill="#68c838"/>
<rect x="722.7" y="340.6" width="11.2" height="11.2" fill="#80ff40"/>
<rect x="734.8" y="340.6" width="11.2" height="11.2" fill="#0a0a1a"/>
<rect x="746.9" y="340.6" width="11.2" height="11.2" fill="#8a8a8a"/>
<rect x="759.0" y="340.6" width="11.2" height="11.2" fill="#000000"/>
<rect x="771.1" y="340.6" width="11.2" height="11.2" fill="#2a1a8a"/>
<rect x="783.2" y="340.6" width="11.2" height="11.2" fill="#1a4a8a"/>
<rect x="795.2" y="340.6" width="11.2" height="11.2" fill="#2a7a8a"/>
<rect x="807.4" y="340.6" width="11.2" height="11.2" fill="#3a9a7a"/>
<rect x="819.5" y="340.6" width="11.2" height="11.2" fill="#40c060"/>
<rect x="831.6" y="340.6" width="11.2" height="11.2" fill="#50e050"/>
<rect x="638.0" y="352.8" width="11.2" height="11.2" fill="#2a1a80"/>
<rect x="650.1" y="352.8" width="11.2" height="11.2" fill="#3a3a90"/>
<rect x="662.2" y="352.8" width="11.2" height="11.2" fill="#2a7878"/>
<rect x="674.2" y="352.8" width="11.2" height="11.2" fill="#389878"/>
<rect x="686.4" y="352.8" width="11.2" height="11.2" fill="#40c870"/>
<rect x="698.5" y="352.8" width="11.2" height="11.2" fill="#48f060"/>
<rect x="710.6" y="352.8" width="11.2" height="11.2" fill="#7a1a8a"/>
<rect x="722.7" y="352.8" width="11.2" height="11.2" fill="#7a3a8a"/>
<rect x="734.8" y="352.8" width="11.2" height="11.2" fill="#8a8a8a"/>
<rect x="746.9" y="352.8" width="11.2" height="11.2" fill="#8a9a6a"/>
<rect x="759.0" y="352.8" width="11.2" height="11.2" fill="#7ad07a"/>
<rect x="771.1" y="352.8" width="11.2" height="11.2" fill="#8af060"/>
<rect x="783.2" y="352.8" width="11.2" height="11.2" fill="#000000"/>
<rect x="795.2" y="352.8" width="11.2" height="11.2" fill="#b0b0b0"/>
<rect x="807.4" y="352.8" width="11.2" height="11.2" fill="#000000"/>
<rect x="819.5" y="352.8" width="11.2" height="11.2" fill="#2a2aaa"/>
<rect x="831.6" y="352.8" width="11.2" height="11.2" fill="#3a4ab0"/>
<rect x="638.0" y="364.8" width="11.2" height="11.2" fill="#2888b8"/>
<rect x="650.1" y="364.8" width="11.2" height="11.2" fill="#30a0a0"/>
<rect x="662.2" y="364.8" width="11.2" height="11.2" fill="#40c8a0"/>
<rect x="674.2" y="364.8" width="11.2" height="11.2" fill="#48f0a0"/>
<rect x="686.4" y="364.8" width="11.2" height="11.2" fill="#2a1ab0"/>
<rect x="698.5" y="364.8" width="11.2" height="11.2" fill="#3a3ab8"/>
<rect x="710.6" y="364.8" width="11.2" height="11.2" fill="#2a78b8"/>
<rect x="722.7" y="364.8" width="11.2" height="11.2" fill="#38a0a8"/>
<rect x="734.8" y="364.8" width="11.2" height="11.2" fill="#50c0a0"/>
<rect x="746.9" y="364.8" width="11.2" height="11.2" fill="#50e0a0"/>
<rect x="759.0" y="364.8" width="11.2" height="11.2" fill="#7a2ab0"/>
<rect x="771.1" y="364.8" width="11.2" height="11.2" fill="#8a3ab0"/>
<rect x="783.2" y="364.8" width="11.2" height="11.2" fill="#7a7ab0"/>
<rect x="795.2" y="364.8" width="11.2" height="11.2" fill="#8aa0b0"/>
<rect x="807.4" y="364.8" width="11.2" height="11.2" fill="#60c0a0"/>
<rect x="819.5" y="364.8" width="11.2" height="11.2" fill="#60e0a0"/>
<rect x="831.6" y="364.8" width="11.2" height="11.2" fill="#000000"/>
<rect x="638.0" y="376.9" width="11.2" height="11.2" fill="#d8d8d8"/>
<rect x="650.1" y="376.9" width="11.2" height="11.2" fill="#000000"/>
<rect x="662.2" y="376.9" width="11.2" height="11.2" fill="#2a2ac8"/>
<rect x="674.2" y="376.9" width="11.2" height="11.2" fill="#3030d0"/>
<rect x="686.4" y="376.9" width="11.2" height="11.2" fill="#2a70d0"/>
<rect x="698.5" y="376.9" width="11.2" height="11.2" fill="#30a0d0"/>
<rect x="710.6" y="376.9" width="11.2" height="11.2" fill="#40c8d0"/>
<rect x="722.7" y="376.9" width="11.2" height="11.2" fill="#48e8c8"/>
<rect x="734.8" y="376.9" width="11.2" height="11.2" fill="#2a2ac8"/>
<rect x="746.9" y="376.9" width="11.2" height="11.2" fill="#3030c8"/>
<rect x="759.0" y="376.9" width="11.2" height="11.2" fill="#3070d0"/>
<rect x="771.1" y="376.9" width="11.2" height="11.2" fill="#38a0d0"/>
<rect x="783.2" y="376.9" width="11.2" height="11.2" fill="#40c8d0"/>
<rect x="795.2" y="376.9" width="11.2" height="11.2" fill="#48e8c8"/>
<rect x="807.4" y="376.9" width="11.2" height="11.2" fill="#7a30d8"/>
<rect x="819.5" y="376.9" width="11.2" height="11.2" fill="#8a38e0"/>
<rect x="831.6" y="376.9" width="11.2" height="11.2" fill="#7a70d8"/>
<rect x="638.0" y="389.1" width="11.2" height="11.2" fill="#5890c8"/>
<rect x="650.1" y="389.1" width="11.2" height="11.2" fill="#60c0c8"/>
<rect x="662.2" y="389.1" width="11.2" height="11.2" fill="#60e8c0"/>
<rect x="674.2" y="389.1" width="11.2" height="11.2" fill="#000000"/>
<rect x="686.4" y="389.1" width="11.2" height="11.2" fill="#f8f8f8"/>
<rect x="698.5" y="389.1" width="11.2" height="11.2" fill="#000000"/>
<rect x="710.6" y="389.1" width="11.2" height="11.2" fill="#2a3ae0"/>
<rect x="722.7" y="389.1" width="11.2" height="11.2" fill="#2a3ae8"/>
<rect x="734.8" y="389.1" width="11.2" height="11.2" fill="#3070e0"/>
<rect x="746.9" y="389.1" width="11.2" height="11.2" fill="#30a0e0"/>
<rect x="759.0" y="389.1" width="11.2" height="11.2" fill="#40c8e0"/>
<rect x="771.1" y="389.1" width="11.2" height="11.2" fill="#40e8e8"/>
<rect x="783.2" y="389.1" width="11.2" height="11.2" fill="#2a2ae0"/>
<rect x="795.2" y="389.1" width="11.2" height="11.2" fill="#3030e8"/>
<rect x="807.4" y="389.1" width="11.2" height="11.2" fill="#3a70e8"/>
<rect x="819.5" y="389.1" width="11.2" height="11.2" fill="#40a0e0"/>
<rect x="831.6" y="389.1" width="11.2" height="11.2" fill="#40c8e0"/>
<rect x="638.0" y="401.1" width="11.2" height="11.2" fill="#40f0f0"/>
<rect x="650.1" y="401.1" width="11.2" height="11.2" fill="#7a3ae0"/>
<rect x="662.2" y="401.1" width="11.2" height="11.2" fill="#8a40e8"/>
<rect x="674.2" y="401.1" width="11.2" height="11.2" fill="#6a6ae8"/>
<rect x="686.4" y="401.1" width="11.2" height="11.2" fill="#7090f0"/>
<rect x="698.5" y="401.1" width="11.2" height="11.2" fill="#70c8e8"/>
<rect x="710.6" y="401.1" width="11.2" height="11.2" fill="#70e8f0"/>
<rect x="722.7" y="401.1" width="11.2" height="11.2" fill="#000000"/>
<rect x="734.8" y="401.1" width="11.2" height="11.2" fill="#e02030"/>
<rect x="746.9" y="401.1" width="11.2" height="11.2" fill="#000000"/>
<rect x="759.0" y="401.1" width="11.2" height="11.2" fill="#b02028"/>
<rect x="771.1" y="401.1" width="11.2" height="11.2" fill="#b83830"/>
<rect x="783.2" y="401.1" width="11.2" height="11.2" fill="#b87030"/>
<rect x="795.2" y="401.1" width="11.2" height="11.2" fill="#b89a38"/>
<rect x="807.4" y="401.1" width="11.2" height="11.2" fill="#b8c040"/>
<rect x="819.5" y="401.1" width="11.2" height="11.2" fill="#a8e040"/>
<rect x="831.6" y="401.1" width="11.2" height="11.2" fill="#d01828"/>
<rect x="638.0" y="413.2" width="11.2" height="11.2" fill="#d03838"/>
<rect x="650.1" y="413.2" width="11.2" height="11.2" fill="#d87030"/>
<rect x="662.2" y="413.2" width="11.2" height="11.2" fill="#e09838"/>
<rect x="674.2" y="413.2" width="11.2" height="11.2" fill="#d8c840"/>
<rect x="686.4" y="413.2" width="11.2" height="11.2" fill="#d8e848"/>
<rect x="698.5" y="413.2" width="11.2" height="11.2" fill="#f02030"/>
<rect x="710.6" y="413.2" width="11.2" height="11.2" fill="#e83040"/>
<rect x="722.7" y="413.2" width="11.2" height="11.2" fill="#e86050"/>
<rect x="734.8" y="413.2" width="11.2" height="11.2" fill="#e89040"/>
<rect x="746.9" y="413.2" width="11.2" height="11.2" fill="#f0b040"/>
<rect x="759.0" y="413.2" width="11.2" height="11.2" fill="#e8e048"/>
<rect x="771.1" y="413.2" width="11.2" height="11.2" fill="#000000"/>
<rect x="783.2" y="413.2" width="11.2" height="11.2" fill="#40e840"/>
<rect x="795.2" y="413.2" width="11.2" height="11.2" fill="#000000"/>
<rect x="807.4" y="413.2" width="11.2" height="11.2" fill="#b02028"/>
<rect x="819.5" y="413.2" width="11.2" height="11.2" fill="#b83830"/>
<rect x="831.6" y="413.2" width="11.2" height="11.2" fill="#b87038"/>
<rect x="638.0" y="425.3" width="11.2" height="11.2" fill="#b8a838"/>
<rect x="650.1" y="425.3" width="11.2" height="11.2" fill="#a8c840"/>
<rect x="662.2" y="425.3" width="11.2" height="11.2" fill="#90e840"/>
<rect x="674.2" y="425.3" width="11.2" height="11.2" fill="#e02028"/>
<rect x="686.4" y="425.3" width="11.2" height="11.2" fill="#d83838"/>
<rect x="698.5" y="425.3" width="11.2" height="11.2" fill="#d87038"/>
<rect x="710.6" y="425.3" width="11.2" height="11.2" fill="#e09838"/>
<rect x="722.7" y="425.3" width="11.2" height="11.2" fill="#d8c848"/>
<rect x="734.8" y="425.3" width="11.2" height="11.2" fill="#e0f068"/>
<rect x="746.9" y="425.3" width="11.2" height="11.2" fill="#f01830"/>
<rect x="759.0" y="425.3" width="11.2" height="11.2" fill="#e83040"/>
<rect x="771.1" y="425.3" width="11.2" height="11.2" fill="#f06048"/>
<rect x="783.2" y="425.3" width="11.2" height="11.2" fill="#f09040"/>
<rect x="795.2" y="425.3" width="11.2" height="11.2" fill="#f8b848"/>
<rect x="807.4" y="425.3" width="11.2" height="11.2" fill="#f0e850"/>
<rect x="819.5" y="425.3" width="11.2" height="11.2" fill="#000000"/>
<rect x="831.6" y="425.3" width="11.2" height="11.2" fill="#2a40e0"/>
<rect x="638.0" y="437.4" width="11.2" height="11.2" fill="#000000"/>
<rect x="650.1" y="437.4" width="11.2" height="11.2" fill="#a02078"/>
<rect x="662.2" y="437.4" width="11.2" height="11.2" fill="#b03878"/>
<rect x="674.2" y="437.4" width="11.2" height="11.2" fill="#b07078"/>
<rect x="686.4" y="437.4" width="11.2" height="11.2" fill="#b0a078"/>
<rect x="698.5" y="437.4" width="11.2" height="11.2" fill="#a8c870"/>
<rect x="710.6" y="437.4" width="11.2" height="11.2" fill="#98e850"/>
<rect x="722.7" y="437.4" width="11.2" height="11.2" fill="#d01860"/>
<rect x="734.8" y="437.4" width="11.2" height="11.2" fill="#d83060"/>
<rect x="746.9" y="437.4" width="11.2" height="11.2" fill="#d07068"/>
<rect x="759.0" y="437.4" width="11.2" height="11.2" fill="#d09870"/>
<rect x="771.1" y="437.4" width="11.2" height="11.2" fill="#c8c060"/>
<rect x="783.2" y="437.4" width="11.2" height="11.2" fill="#d8e848"/>
<rect x="795.2" y="437.4" width="11.2" height="11.2" fill="#f02040"/>
<rect x="807.4" y="437.4" width="11.2" height="11.2" fill="#f03858"/>
<rect x="819.5" y="437.4" width="11.2" height="11.2" fill="#f86048"/>
<rect x="831.6" y="437.4" width="11.2" height="11.2" fill="#f09060"/>
<rect x="638.0" y="449.6" width="11.2" height="11.2" fill="#f0c040"/>
<rect x="650.1" y="449.6" width="11.2" height="11.2" fill="#e8f060"/>
<rect x="662.2" y="449.6" width="11.2" height="11.2" fill="#000000"/>
<rect x="674.2" y="449.6" width="11.2" height="11.2" fill="#e8e840"/>
<rect x="686.4" y="449.6" width="11.2" height="11.2" fill="#000000"/>
<rect x="698.5" y="449.6" width="11.2" height="11.2" fill="#a020a8"/>
<rect x="710.6" y="449.6" width="11.2" height="11.2" fill="#a838a8"/>
<rect x="722.7" y="449.6" width="11.2" height="11.2" fill="#a870a8"/>
<rect x="734.8" y="449.6" width="11.2" height="11.2" fill="#a8a8a8"/>
<rect x="746.9" y="449.6" width="11.2" height="11.2" fill="#a8c890"/>
<rect x="759.0" y="449.6" width="11.2" height="11.2" fill="#80f090"/>
<rect x="771.1" y="449.6" width="11.2" height="11.2" fill="#d02890"/>
<rect x="783.2" y="449.6" width="11.2" height="11.2" fill="#e03090"/>
<rect x="795.2" y="449.6" width="11.2" height="11.2" fill="#e07090"/>
<rect x="807.4" y="449.6" width="11.2" height="11.2" fill="#e09890"/>
<rect x="819.5" y="449.6" width="11.2" height="11.2" fill="#e0c898"/>
<rect x="831.6" y="449.6" width="11.2" height="11.2" fill="#e0f080"/>
<rect x="638.0" y="461.6" width="11.2" height="11.2" fill="#f02898"/>
<rect x="650.1" y="461.6" width="11.2" height="11.2" fill="#f03090"/>
<rect x="662.2" y="461.6" width="11.2" height="11.2" fill="#e870a0"/>
<rect x="674.2" y="461.6" width="11.2" height="11.2" fill="#f09890"/>
<rect x="686.4" y="461.6" width="11.2" height="11.2" fill="#f0c8a0"/>
<rect x="698.5" y="461.6" width="11.2" height="11.2" fill="#f0f0a0"/>
<rect x="710.6" y="461.6" width="11.2" height="11.2" fill="#000000"/>
<rect x="722.7" y="461.6" width="11.2" height="11.2" fill="#40e8e8"/>
<rect x="734.8" y="461.6" width="11.2" height="11.2" fill="#000000"/>
<rect x="746.9" y="461.6" width="11.2" height="11.2" fill="#a030c8"/>
<rect x="759.0" y="461.6" width="11.2" height="11.2" fill="#a840d0"/>
<rect x="771.1" y="461.6" width="11.2" height="11.2" fill="#a870d8"/>
<rect x="783.2" y="461.6" width="11.2" height="11.2" fill="#a8a0d8"/>
<rect x="795.2" y="461.6" width="11.2" height="11.2" fill="#a0d0d8"/>
<rect x="807.4" y="461.6" width="11.2" height="11.2" fill="#80f0c0"/>
<rect x="819.5" y="461.6" width="11.2" height="11.2" fill="#c030d8"/>
<rect x="831.6" y="461.6" width="11.2" height="11.2" fill="#c038d8"/>
<rect x="638.0" y="473.7" width="11.2" height="11.2" fill="#d050d0"/>
<rect x="650.1" y="473.7" width="11.2" height="11.2" fill="#d890d8"/>
<rect x="662.2" y="473.7" width="11.2" height="11.2" fill="#d8d8d8"/>
<rect x="674.2" y="473.7" width="11.2" height="11.2" fill="#e8f8e0"/>
<rect x="686.4" y="473.7" width="11.2" height="11.2" fill="#f028d8"/>
<rect x="698.5" y="473.7" width="11.2" height="11.2" fill="#f030d0"/>
<rect x="710.6" y="473.7" width="11.2" height="11.2" fill="#e870d8"/>
<rect x="722.7" y="473.7" width="11.2" height="11.2" fill="#f098d0"/>
<rect x="734.8" y="473.7" width="11.2" height="11.2" fill="#f8d0c8"/>
<rect x="746.9" y="473.7" width="11.2" height="11.2" fill="#f8f8d0"/>
<rect x="759.0" y="473.7" width="11.2" height="11.2" fill="#000000"/>
<rect x="771.1" y="473.7" width="11.2" height="11.2" fill="#f030e8"/>
<rect x="783.2" y="473.7" width="11.2" height="11.2" fill="#000000"/>
<rect x="795.2" y="473.7" width="11.2" height="11.2" fill="#9030e0"/>
<rect x="807.4" y="473.7" width="11.2" height="11.2" fill="#9838e0"/>
<rect x="819.5" y="473.7" width="11.2" height="11.2" fill="#a070e0"/>
<rect x="831.6" y="473.7" width="11.2" height="11.2" fill="#80a0f0"/>
<rect x="638.0" y="485.8" width="11.2" height="11.2" fill="#80d0e8"/>
<rect x="650.1" y="485.8" width="11.2" height="11.2" fill="#80f0e0"/>
<rect x="662.2" y="485.8" width="11.2" height="11.2" fill="#b030e0"/>
<rect x="674.2" y="485.8" width="11.2" height="11.2" fill="#b040e0"/>
<rect x="686.4" y="485.8" width="11.2" height="11.2" fill="#c070e8"/>
<rect x="698.5" y="485.8" width="11.2" height="11.2" fill="#d0a0e8"/>
<rect x="710.6" y="485.8" width="11.2" height="11.2" fill="#e0e0e8"/>
<rect x="722.7" y="485.8" width="11.2" height="11.2" fill="#f0f8f0"/>
<rect x="734.8" y="485.8" width="11.2" height="11.2" fill="#f030f0"/>
<rect x="746.9" y="485.8" width="11.2" height="11.2" fill="#f038f0"/>
<rect x="759.0" y="485.8" width="11.2" height="11.2" fill="#e070e8"/>
<rect x="771.1" y="485.8" width="11.2" height="11.2" fill="#e098e0"/>
<rect x="783.2" y="485.8" width="11.2" height="11.2" fill="#f0c8f0"/>
<rect x="795.2" y="485.8" width="11.2" height="11.2" fill="#ffffff"/>
<rect x="807.4" y="485.8" width="11.2" height="11.2" fill="#606060"/>
<rect x="819.5" y="485.8" width="11.2" height="11.2" fill="url(#lg)"/>
<rect x="831.6" y="485.8" width="11.2" height="11.2" fill="url(#rg0)"/>
<rect x="638.0" y="497.9" width="11.2" height="11.2" fill="url(#rgr)"/>
<rect x="650.1" y="497.9" width="11.2" height="11.2" fill="url(#rgg)"/>
<rect x="662.2" y="497.9" width="11.2" height="11.2" fill="url(#rgb)"/>
<rect x="674.2" y="497.9" width="23.4" height="11.2" fill="url(#rain)"/>
<rect x="698.5" y="497.9" width="11.2" height="11.2" fill="#f0e8e0"/>
<path d="M761.500 418 L761.500 430 L764.300 427.300 L766.800 432.500 L768.600 431.700 L766.200 426.500 L770 426.300 Z" fill="#111" stroke="#222" stroke-width="0.600"/>
</svg>
<!-- PROPERTIES -->
<div style="left:857px;top:84px;width:260px;height:544px;background:#444246"></div>
<div style="left:857px;top:84px;width:260px;height:16px;background:#302e31"></div>
<div style="left:859px;top:86px;width:55px;height:14px;background:#424143"></div>
<div class="t ptb" style="left:864px;top:88px;font-size:9.5px;color:#e2e1e2">Properties</div>
<svg style="position:absolute;left:1096px;top:75px" width="18" height="24" viewBox="0 0 18 24"><g fill="#9a999a"><path d="M10 2l3 3-3 3z"/><path d="M14 2l3 3-3 3z"/><rect x="5" y="16" width="3" height="1.500"/><rect x="9" y="14" width="7" height="8" fill="#6f6e70"/></g></svg>
<!-- shape -->
<svg style="position:absolute;left:880px;top:118px" width="18" height="18"><circle cx="6" cy="6" r="5" fill="#aaa9aa"/><rect x="7" y="7" width="9" height="9" fill="#7a797a" stroke="#aaa9aa" stroke-width="1"/></svg>
<div class="t pt" style="left:920px;top:111px;font-size:10.5px;color:#cfcecf">Shape</div>
<div style="left:858px;top:153px;width:258px;height:2px;background:#333234"></div>
<!-- position and size header -->
<div style="left:858px;top:156px;width:258px;height:14px;background:#4a484b"></div>
<svg style="position:absolute;left:863px;top:160px" width="9" height="7"><path d="M0.500 0.500h8l-4 6z" fill="#d5d4d5"/></svg>
<div class="t pt" style="left:875px;top:158px;font-size:10px;color:#c9c8c9">Position and Size</div>
<div style="left:858px;top:170px;width:258px;height:1px;background:#2f2e30"></div>
<div class="t pt" style="left:906px;top:181px;font-size:10px;color:#d0cfd0">X:</div>
<div class="t" style="left:922px;top:181px;font-size:10.5px;color:#c6a43a;border-bottom:1px dotted #8a7a30">347.85</div>
<div class="t pt" style="left:1007px;top:181px;font-size:10px;color:#d0cfd0">Y:</div>
<div class="t" style="left:1024px;top:181px;font-size:10.5px;color:#c6a43a;border-bottom:1px dotted #8a7a30">248.65</div>
<div style="left:858px;top:200px;width:258px;height:1px;background:#39383a"></div>
<svg style="position:absolute;left:860px;top:207px" width="16" height="14"><g fill="none" stroke="#bdbcbd" stroke-width="1.300"><path d="M4 4 C1 4 1 10 4 10 L7 10"/><path d="M10 4 C13 4 13 10 10 10 L7 10"/><path d="M4 4h3"/></g></svg>
<div class="t pt" style="left:904px;top:209px;font-size:10px;color:#d0cfd0">W:</div>
<div class="t" style="left:922px;top:209px;font-size:10.5px;color:#c6a43a;border-bottom:1px dotted #8a7a30">444.35</div>
<div class="t pt" style="left:1007px;top:209px;font-size:10px;color:#d0cfd0">H:</div>
<div class="t" style="left:1024px;top:209px;font-size:10.5px;color:#c6a43a;border-bottom:1px dotted #8a7a30">230.00</div>
<div style="left:858px;top:229px;width:258px;height:2px;background:#333234"></div>
<!-- fill and stroke header -->
<div style="left:858px;top:231px;width:258px;height:14px;background:#4a484b"></div>
<svg style="position:absolute;left:863px;top:235px" width="9" height="7"><path d="M0.500 0.500h8l-4 6z" fill="#d5d4d5"/></svg>
<div class="t pt" style="left:875px;top:233px;font-size:10px;color:#c9c8c9">Fill and Stroke</div>
<div style="left:858px;top:245px;width:258px;height:1px;background:#2f2e30"></div>
<svg style="position:absolute;left:902px;top:256px" width="14" height="14"><path d="M2 12 L3 9 L10 2 L12 4 L5 11 Z" fill="#bdbcbd"/></svg>
<div style="left:930px;top:256px;width:24px;height:11px;background:#bdbcbd"></div>
<svg style="position:absolute;left:930px;top:256px" width="24" height="11"><path d="M1 10 L23 1" stroke="#6a696a" stroke-width="1"/></svg>
<svg style="position:absolute;left:1008px;top:254px" width="16" height="16"><g fill="#bdbcbd"><circle cx="6" cy="5" r="3"/><path d="M2 8 L10 8 L12 13 L4 14 Z"/><circle cx="13" cy="13" r="2"/></g></svg>
<div style="left:1031px;top:256px;width:26px;height:12px;background:#cfef3c;border:1px solid #9ab030"></div>
<div style="left:858px;top:275px;width:258px;height:1px;background:#39383a"></div>
<svg style="position:absolute;left:928px;top:284px" width="80" height="16"><g stroke="#c8c7c8" stroke-width="1.300" fill="none"><path d="M2 2v12M13 2v12"/><path d="M4 8h6M8 6l2 2-2 2"/><rect x="32.500" y="1.500" width="13" height="13"/></g><g fill="#c8c7c8"><rect x="35" y="4" width="3" height="3"/><rect x="40" y="8" width="3" height="3"/><rect x="36" y="10" width="2" height="2"/></g><g fill="#5e5d5f"><rect x="61" y="2" width="6" height="12"/><rect x="63" y="5" width="10" height="3"/></g></svg>
<div style="left:858px;top:303px;width:258px;height:1px;background:#39383a"></div>
<div class="t pt" style="left:882px;top:316px;font-size:10px;color:#cfcecf">Stroke:</div>
<div style="left:931px;top:320px;width:87px;height:2px;background:#2c2b2d"></div>
<div style="left:1031px;top:314px;width:40px;height:14px;background:#6a696b"></div>
<div class="t pt" style="left:889px;top:340px;font-size:10px;color:#cfcecf">Style:</div>
<svg style="position:absolute;left:930px;top:338px" width="12" height="12"><g fill="#6e6d6f"><path d="M6 1 L7 5 L11 5 L8 7 L9 11 L6 9 L3 11 L4 7 L1 5 L5 5Z"/></g></svg>
<div style="left:952px;top:335px;width:125px;height:16px;background:#3c3b3d;border:1px solid #38373a"></div>
<div style="left:961px;top:345px;width:88px;height:1px;background:#7c7b7d"></div>
<svg style="position:absolute;left:1065px;top:343px" width="8" height="7"><path d="M0.500 0.500h6l-3.0 4.8999999999999995z" fill="#777"/></svg>
<svg style="position:absolute;left:1083px;top:337px" width="14" height="14"><path d="M2 12 L10 3 L12 5 L4 13Z" fill="#6e6d6f"/></svg>
<div class="t pt" style="left:885px;top:362px;font-size:10px;color:#cfcecf">Width:</div>
<div style="left:927px;top:359px;width:115px;height:16px;background:#383739;border:1px solid #333234"></div>
<div style="left:935px;top:364px;width:80px;height:7px;background:#5c9a5c"></div>
<div style="left:935px;top:367px;width:80px;height:1px;background:#a9d09a"></div>
<svg style="position:absolute;left:1033px;top:367px" width="8" height="7"><path d="M0.500 0.500h6l-3.0 4.8999999999999995z" fill="#777"/></svg>
<svg style="position:absolute;left:1046px;top:361px" width="56" height="14"><g stroke="#6e6d6f" stroke-width="2" fill="none"><path d="M4 7h8M8 3v8"/><path d="M20 7h8"/><path d="M39 4 a4 4 0 1 1 -1 0"/></g></svg>
<div style="left:858px;top:380px;width:258px;height:1px;background:#38373a"></div>
<div class="t pt" style="left:888px;top:387px;font-size:10px;color:#cfcecf">Scale:</div>
<div style="left:925px;top:383px;width:100px;height:16px;background:#3d3c3e;border:1px solid #38373a"></div>
<svg style="position:absolute;left:1016px;top:391px" width="8" height="7"><path d="M0.500 0.500h6l-3.0 4.8999999999999995z" fill="#777"/></svg>
<div style="left:1031px;top:385px;width:12px;height:12px;border:1px solid #39383a"></div>
<div class="t pt" style="left:1042px;top:387px;font-size:10px;color:#737274">Hinting</div>
<div style="left:858px;top:404px;width:258px;height:1px;background:#38373a"></div>
<div class="t pt" style="left:893px;top:415px;font-size:10px;color:#cfcecf">Cap:</div>
<div style="left:935px;top:419px;width:6px;height:1px;background:#2e2d2f"></div><div style="left:951px;top:417px;width:6px;height:2px;background:#555"></div>
<div class="t pt" style="left:893px;top:435px;font-size:10px;color:#cfcecf">Join:</div>
<div style="left:935px;top:439px;width:6px;height:1px;background:#2e2d2f"></div><div style="left:951px;top:437px;width:6px;height:2px;background:#555"></div>
<div class="t pt" style="left:991px;top:435px;font-size:10px;color:#cfcecf">Miter:</div>
<div class="t pt" style="left:1024px;top:435px;font-size:10px;color:#6f6e70">3.00</div>
<!-- TOOLS -->
<div style="left:1119px;top:84px;width:31px;height:544px;background:#302e31"></div>
<div style="left:1120px;top:100px;width:30px;height:528px;background:#444246"></div>
<svg style="position:absolute;left:1130px;top:75px" width="20" height="24" viewBox="0 0 20 24"><g fill="#9a999a"><path d="M11 2l3 3-3 3z"/><path d="M15 2l3 3-3 3z"/><rect x="4" y="16" width="3" height="1.500"/><rect x="8" y="14" width="8" height="8" fill="#6f6e70"/></g></svg>
<svg style="position:absolute;left:1120px;top:100px" width="30" height="528" viewBox="1120 100 30 528">
 <g fill="none" stroke="#c9c8c9" stroke-width="1.300" stroke-linejoin="round">
  <path d="M1128 107 L1128 121 L1131.500 118 L1134 123 L1136 122 L1133.500 117 L1138 116.500 Z"/>
 </g>
 <path d="M1129 131 L1129 145 L1132.500 142 L1135 147 L1137 146 L1134.500 141 L1139 140.500 Z" fill="#c9c8c9"/>
 <rect x="1122" y="153" width="26" height="19" fill="#242325"/>
 <path d="M1127 155 L1127 168 L1130 165 L1132 169 L1134 168 L1132 164 L1136 164 Z" fill="#c9c8c9"/>
 <g fill="#c9c8c9"><rect x="1136" y="156" width="2" height="2"/><rect x="1140" y="156" width="2" height="2"/><rect x="1143" y="156" width="2" height="2"/><rect x="1143" y="161" width="2" height="2"/><rect x="1140" y="166" width="2" height="2"/><rect x="1143" y="166" width="2" height="2"/><rect x="1145" y="169" width="2" height="2"/></g>
 <path d="M1134 179 L1141 184 L1138 193 L1130 193 L1127 184 Z" fill="#b9b8b9"/><path d="M1127 184 L1141 184" stroke="#444246" stroke-width="1.500"/>
 <ellipse cx="1134" cy="210" rx="7" ry="4.500" fill="none" stroke="#c9c8c9" stroke-width="1.800"/><path d="M1130 214 L1128 218" stroke="#c9c8c9" stroke-width="1.300"/>
 <path d="M1129 246 L1132 237 L1138 232 L1141 235 L1136 241 Z" fill="#c9c8c9"/>
 <text x="1128" y="270" font-family="Liberation Serif" font-size="16" fill="#d0cfd0">T</text>
 <path d="M1128 294 L1141 281" stroke="#c9c8c9" stroke-width="1.600"/>
 <rect x="1127.500" y="305.500" width="13" height="11" fill="#8a898a" stroke="#c9c8c9" stroke-width="1.300"/>
 <ellipse cx="1134" cy="336" rx="6.500" ry="5" fill="#8a898a" stroke="#c9c8c9" stroke-width="1.300"/>
 <path d="M1130 353 L1138 353 L1142 360 L1138 367 L1130 367 L1126 360 Z" fill="#8a898a" stroke="#c9c8c9" stroke-width="1.300"/>
 <path d="M1128 389 L1130 384 L1138 376 L1141 379 L1133 387 Z" fill="#c9c8c9"/>
 <path d="M1128 413 L1132 409 L1141 400" stroke="#c9c8c9" stroke-width="2" fill="none"/><path d="M1126 410 C1128 404 1134 403 1135 404" stroke="#c9c8c9" stroke-width="1" fill="none"/>
 <path d="M1127 436 L1131 432 L1141 424" stroke="#d0cfd0" stroke-width="2.200" fill="none"/>
 <path d="M1126 445 H1146" stroke="#39383a" stroke-width="1"/><path d="M1123 223.500 H1148" stroke="#333134" stroke-width="1"/>
 <path d="M1129 466 L1139 455" stroke="#c9c8c9" stroke-width="2.500"/><g fill="#c9c8c9"><circle cx="1128" cy="465" r="2"/><circle cx="1130" cy="467" r="2"/><circle cx="1138" cy="454" r="2"/><circle cx="1140" cy="456" r="2"/></g>
 <path d="M1128 483 L1133 478 L1139 484 L1134 489 Z" fill="#c9c8c9"/><circle cx="1132" cy="476" r="2" fill="none" stroke="#c9c8c9"/>
 <path d="M1127 507 L1131 502 L1135 506 L1131 511 Z" fill="#c9c8c9"/><rect x="1134.500" y="505.500" width="6" height="6" fill="none" stroke="#c9c8c9"/>
 <path d="M1129 538 L1137 528" stroke="#c9c8c9" stroke-width="2.500"/><path d="M1136 527 L1140 524" stroke="#c9c8c9" stroke-width="3"/>
 <path d="M1127 558 L1134 550 L1141 553 L1134 561 Z" fill="#c9c8c9"/>
 <path d="M1128 580 L1133 574 L1139 577 L1134 583 Z" fill="#b9b8b9"/>
 <path d="M1126 594 H1146" stroke="#39383a" stroke-width="1"/>
 <path d="M1129 614 L1127 605 L1129 604 L1131 609 L1131 601 L1133 601 L1133 608 L1135 600 L1137 600 L1136 608 L1138 602 L1140 603 L1138 613 Z" fill="#c9c8c9"/>
 <circle cx="1134" cy="627" r="5" fill="none" stroke="#c9c8c9" stroke-width="1.500"/>
 <g fill="#8a898a"><circle cx="1145" cy="122" r="0.800"/><circle cx="1145" cy="194" r="1"/><circle cx="1145" cy="218" r="1"/><circle cx="1145" cy="245" r="1"/><circle cx="1145" cy="318" r="1"/><circle cx="1145" cy="342" r="1"/><circle cx="1145" cy="465" r="1"/><circle cx="1145" cy="614" r="1"/></g>
</svg>
<!-- WATERMARK -->
<svg style="position:absolute;left:0;top:0" width="1200" height="628" viewBox="0 0 1200 628">
 <path d="M1005.800 549.500 L1010.500 554.200 L1005.800 558.900 L1001.100 554.200 Z" fill="#2b9fdb"/>
 <path d="M990.500 569.500 L998 562 L1005.800 569 L1013.500 562 L1021 569.500 L1005.800 580.500 Z" fill="#2b9fdb"/>
 <g font-family="Liberation Sans" font-weight="bold" fill="#ffffff" stroke="#ffffff" stroke-width="2.200" stroke-linejoin="round">
  <text x="1025" y="581" font-size="37" textLength="20" lengthAdjust="spacingAndGlyphs">U</text>
  <text x="1047" y="572.500" font-size="31" textLength="46" lengthAdjust="spacingAndGlyphs">pto</text>
  <text x="1096" y="577" font-size="38" textLength="24" lengthAdjust="spacingAndGlyphs">D</text>
  <text x="1122" y="577" font-size="36" textLength="48" lengthAdjust="spacingAndGlyphs">own</text>
 </g>
 <text x="1058" y="581.500" font-family="Liberation Sans" font-weight="bold" font-size="7.500" fill="#ffffff" textLength="69" lengthAdjust="spacing">SOFT.COM</text>
</svg>
</body></html>
